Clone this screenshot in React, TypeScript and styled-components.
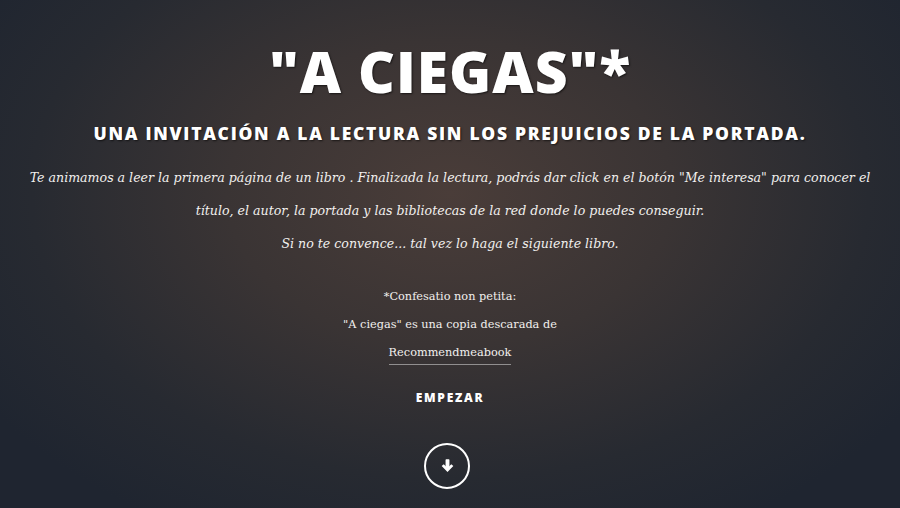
import React from "react";
import styled, { createGlobalStyle } from "styled-components";

const GlobalStyle = createGlobalStyle`
  html, body {
    margin: 0;
    padding: 0;
    height: 100%;
  }
  body {
    background: #1f2530;
  }
`;

const Banner = styled.section`
  width: 900px;
  height: 508px;
  overflow: hidden;
  box-sizing: border-box;
  display: flex;
  flex-direction: column;
  align-items: center;
  padding-top: 40px;
  color: #ffffff;
  text-align: center;
  background: radial-gradient(
    ellipse 62% 75% at 50% 38%,
    #4a3d39 0%,
    #3a3434 40%,
    #272a31 75%,
    #1f2530 100%
  );
`;

const Title = styled.h1`
  margin: 0;
  font-family: "Open Sans", "Liberation Sans", sans-serif;
  font-weight: 800;
  font-size: 57px;
  line-height: 62px;
  letter-spacing: 1px;
  text-shadow: 1px 1px 2px rgba(0, 0, 0, 0.6);
`;

const Subtitle = styled.h2`
  margin: 20px 0 0;
  font-family: "Open Sans", "Liberation Sans", sans-serif;
  font-weight: 800;
  font-size: 17.5px;
  line-height: 22px;
  letter-spacing: 1.7px;
  text-shadow: 1px 1px 2px rgba(0, 0, 0, 0.6);
`;

const Intro = styled.p`
  margin: 17px 0 0;
  font-family: "DejaVu Serif", "Liberation Serif", serif;
  font-style: italic;
  font-size: 12.6px;
  line-height: 33px;
  color: #f2f0ee;
`;

const Confession = styled.p`
  margin: 23px 0 0;
  font-family: "DejaVu Serif", "Liberation Serif", serif;
  font-size: 11.3px;
  line-height: 28px;
  color: #f2f0ee;
`;

const SourceLink = styled.a`
  display: inline-block;
  color: #f2f0ee;
  text-decoration: none;
  line-height: 22px;
  border-bottom: 1px solid rgba(255, 255, 255, 0.45);
`;

const StartLink = styled.a`
  margin-top: 22px;
  font-family: "Open Sans", "Liberation Sans", sans-serif;
  font-weight: 800;
  font-size: 12px;
  letter-spacing: 1.7px;
  color: #ffffff;
  text-decoration: none;
`;

const ScrollButton = styled.a`
  margin: 37px 6px 0 0;
  width: 42px;
  height: 42px;
  border: 2px solid #ffffff;
  border-radius: 50%;
  display: flex;
  align-items: center;
  justify-content: center;
`;

const DownArrow = () => (
  <svg width="13" height="14" viewBox="0 0 12 13" fill="#ffffff">
    <rect x="4.2" y="0.3" width="3.6" height="8" rx="0.6" />
    <path d="M0.6 6.4 L6 12 L11.4 6.4 L9.5 4.8 L6 8.4 L2.5 4.8 Z" />
  </svg>
);

const App = () => {
  return (
    <>
      <GlobalStyle />
      <Banner>
        <Title>"A CIEGAS"*</Title>
        <Subtitle>UNA INVITACIÓN A LA LECTURA SIN LOS PREJUICIOS DE LA PORTADA.</Subtitle>
        <Intro>
          Te animamos a leer la primera página de un libro . Finalizada la lectura, podrás dar click en
          el botón "Me interesa" para conocer el
          <br />
          título, el autor, la portada y las bibliotecas de la red donde lo puedes conseguir.
          <br />
          Si no te convence... tal vez lo haga el siguiente libro.
        </Intro>
        <Confession>
          *Confesatio non petita:
          <br />
          "A ciegas" es una copia descarada de
          <br />
          <SourceLink href="#">Recommendmeabook</SourceLink>
        </Confession>
        <StartLink href="#">EMPEZAR</StartLink>
        <ScrollButton href="#">
          <DownArrow />
        </ScrollButton>
      </Banner>
    </>
  );
};

export default App;
